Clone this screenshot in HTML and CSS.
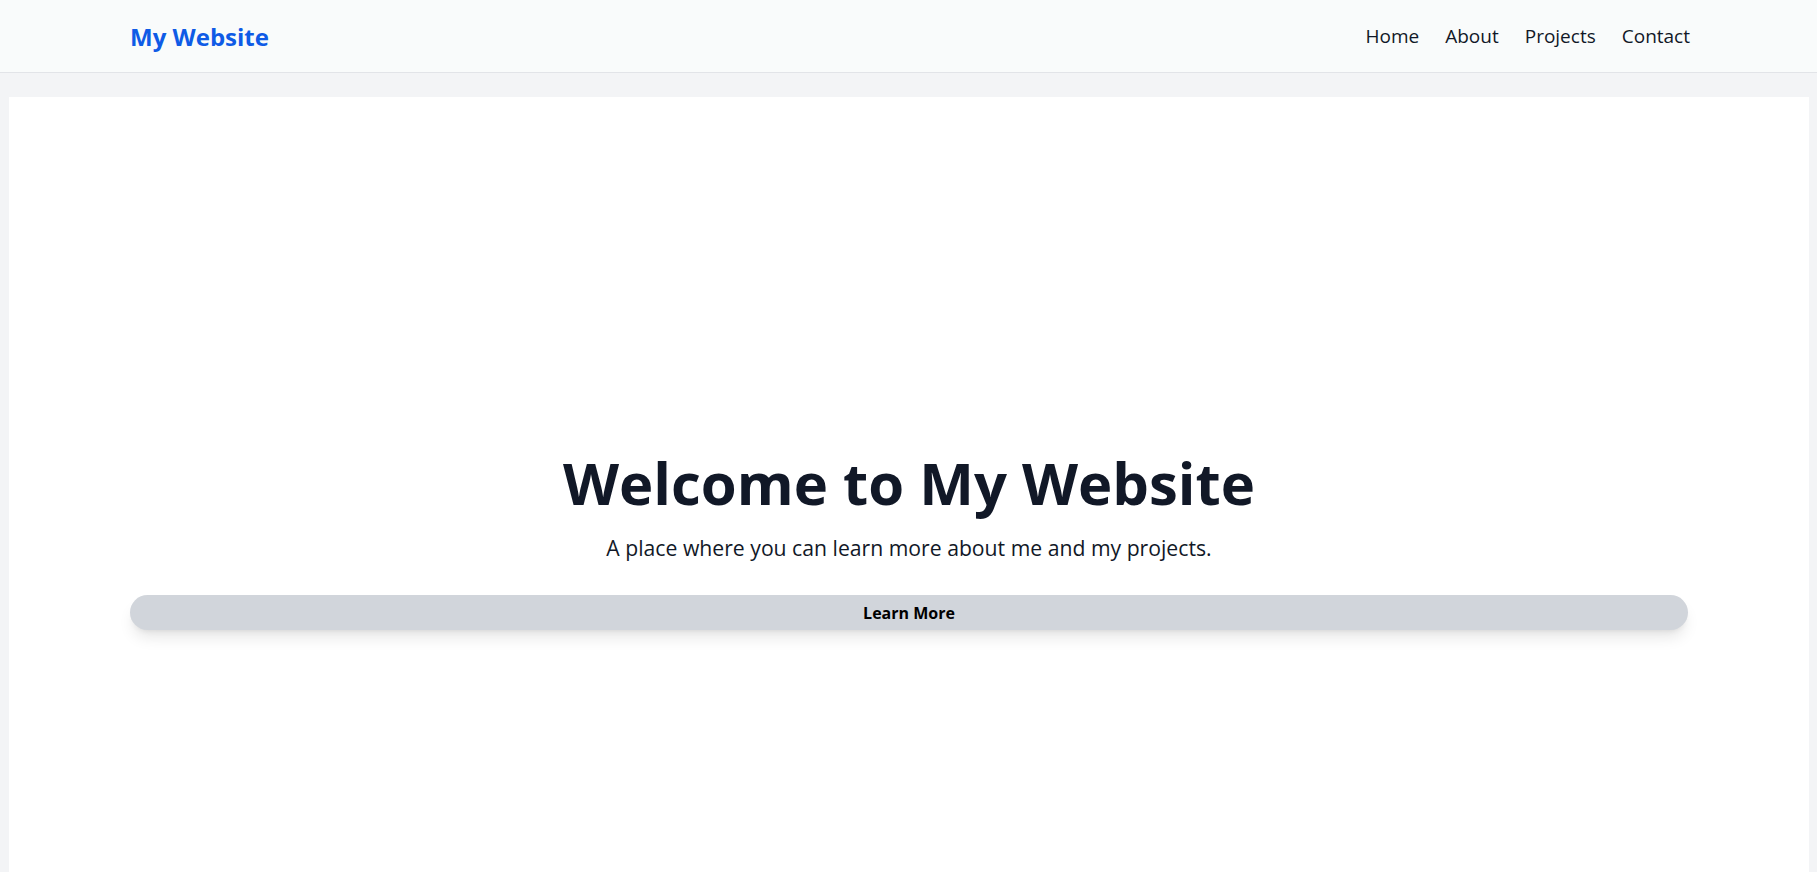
FILE: index.html
```html
<!DOCTYPE html>
<html lang="en">
<head>
<meta charset="utf-8">
<title>My Website</title>
<link rel="stylesheet" href="styles.css">
</head>
<body>
<header class="site-header">
  <div class="header-inner">
    <a class="logo" href="#">My Website</a>
    <nav class="nav">
      <a href="#">Home</a>
      <a href="#">About</a>
      <a href="#">Projects</a>
      <a href="#">Contact</a>
    </nav>
  </div>
</header>
<main class="panel">
  <section class="hero">
    <h1 class="hero-title">Welcome to My Website</h1>
    <p class="hero-sub">A place where you can learn more about me and my projects.</p>
    <button class="hero-btn">Learn More</button>
  </section>
</main>
</body>
</html>
```

FILE: styles.css
```css
* { box-sizing: border-box; }
html, body { margin: 0; padding: 0; }
body {
  background: #f3f4f6;
  font-family: "Open Sans", "Noto Sans", "Liberation Sans", sans-serif;
  color: #111827;
}
.site-header {
  height: 73px;
  background: #f9fbfb;
  border-bottom: 1px solid #e2e4e8;
}
.header-inner {
  height: 72px;
  padding: 0 127px 0 130px;
  display: flex;
  align-items: center;
  justify-content: space-between;
}
.logo {
  font-size: 24px;
  font-weight: 700;
  color: #0f5be6;
  text-decoration: none;
}
.nav {
  display: flex;
  gap: 26px;
}
.nav a {
  font-size: 19px;
  color: #111827;
  text-decoration: none;
}
.panel {
  margin: 24px 8px 0 9px;
  background: #ffffff;
  min-height: 900px;
}
.hero {
  padding: 356px 121px 0;
  display: flex;
  flex-direction: column;
  align-items: center;
}
.hero-title {
  margin: 0;
  font-size: 58px;
  line-height: 60px;
  font-weight: 700;
  color: #111827;
}
.hero-sub {
  margin: 21px 0 0;
  font-size: 21.2px;
  line-height: 28px;
  color: #111827;
}
.hero-btn {
  margin-top: 33px;
  width: 100%;
  height: 35px;
  border: none;
  border-radius: 18px;
  background: #d1d5db;
  font-family: inherit;
  font-size: 16px;
  font-weight: 700;
  color: #000;
  box-shadow: 0 10px 15px -3px rgba(0,0,0,0.1), 0 4px 6px -4px rgba(0,0,0,0.1);
}
```
